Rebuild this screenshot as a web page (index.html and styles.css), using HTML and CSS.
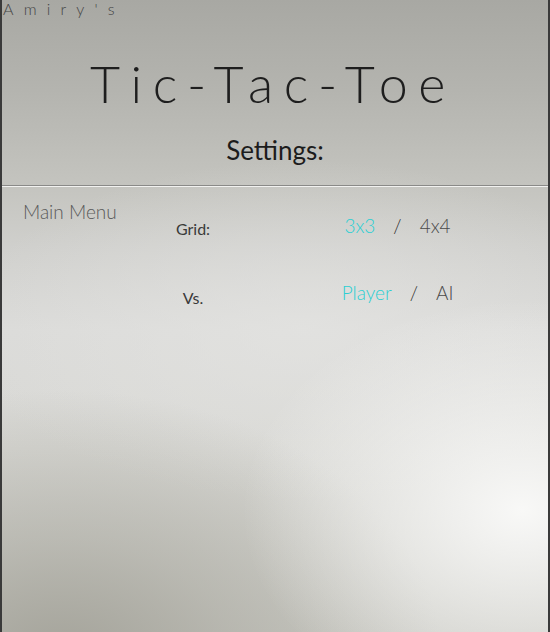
FILE: index.html
```html
<!DOCTYPE html>
<html>
<head>
<meta charset="utf-8">
<link rel="stylesheet" href="styles.css">
</head>
<body>
<div class="frame">
  <header class="header">
    <div class="brand">Amiry's</div>
    <h1 class="title">Tic-Tac-Toe</h1>
    <h2 class="subtitle">Settings:</h2>
  </header>
  <main class="content">
    <a class="menu">Main Menu</a>
    <div class="settings">
      <div class="label">Grid:</div>
      <div class="options opt-grid"><span class="on">3x3</span><span class="sep">/</span><span class="off">4x4</span></div>
      <div class="label label-vs">Vs.</div>
      <div class="options opt-vs"><span class="on">Player</span><span class="sep">/</span><span class="off">AI</span></div>
    </div>
  </main>
</div>
</body>
</html>
```

FILE: styles.css
```css
html, body {
  margin: 0;
  padding: 0;
  height: 100%;
}
body {
  font-family: Lato, "Open Sans", "DejaVu Sans", sans-serif;
  background: #3a3a3a;
}
.frame {
  box-sizing: border-box;
  height: 632px;
  margin: 0 2px 0 2px;
  width: 546px;
  display: flex;
  flex-direction: column;
  background:
    radial-gradient(ellipse 280px 210px at 520px 510px, rgba(250,250,249,0.95), rgba(250,250,249,0) 100%),
    radial-gradient(ellipse 380px 270px at 60px 660px, rgba(164,163,154,1), rgba(164,163,154,0.5) 45%, rgba(164,163,154,0) 100%),
    radial-gradient(ellipse 340px 170px at 300px 330px, rgba(228,228,226,0.7), rgba(228,228,226,0) 100%),
    linear-gradient(180deg, #a8a8a3 0px, #b4b4af 90px, #c4c4bf 185px, #d0d0cd 250px, #dbdbd9 330px, #d8d8d4 450px, #cbcbc5 632px);
}
.header {
  height: 185px;
  border-bottom: 1px solid #8a8a88;
  box-shadow: 0 1px 0 #f2f2f0;
  display: flex;
  flex-direction: column;
  align-items: center;
}
.brand {
  align-self: flex-start;
  margin-left: 1px;
  font-size: 16px;
  font-weight: 300;
  letter-spacing: 10.2px;
  color: #444;
  line-height: 18px;
}
.title {
  margin: 35px 0 0 0;
  font-size: 52px;
  font-weight: 300;
  letter-spacing: 10.5px;
  padding-right: 4px;
  color: #1e1e1e;
  line-height: 60px;
}
.subtitle {
  margin: 21px 0 0 0;
  font-size: 26px;
  font-weight: 400;
  color: #1c1c1c;
  line-height: 32px;
}
.content {
  display: flex;
  padding-top: 14px;
}
.menu {
  flex: none;
  margin-left: 21px;
  font-size: 19px;
  font-weight: 300;
  color: #5a5a5a;
  line-height: 24px;
  width: 130px;
}
.settings {
  flex: 1;
  display: grid;
  grid-template-columns: 80px 1fr;
  grid-auto-rows: 68px;
  padding-top: 14px;
}
.label {
  font-size: 16px;
  color: #3a3a3a;
  text-align: center;
  line-height: 20px;
  padding-top: 5px;
}
.label-vs { padding-top: 6px; }
.options {
  display: flex;
  justify-content: center;
  gap: 18px;
  padding-left: 14px;
  font-size: 19px;
  font-weight: 300;
  line-height: 24px;
}
.on { color: #2ccfd3; }
.off { color: #4a4a4a; }
.sep { color: #1e1e1e; }
.opt-vs { margin-top: -1px; }
```
